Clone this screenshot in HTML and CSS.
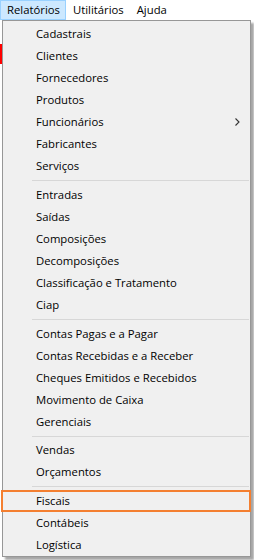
FILE: index.html
```html
<!DOCTYPE html>
<html lang="pt">
<head>
<meta charset="utf-8">
<link rel="stylesheet" href="styles.css">
</head>
<body>
<div class="menubar">
  <div class="top-item active">Relatórios</div>
  <div class="top-item">Utilitários</div>
  <div class="top-item">Ajuda</div>
</div>
<div class="marker"></div>
<div class="dropdown">
  <div class="item">Cadastrais</div>
  <div class="item">Clientes</div>
  <div class="item">Fornecedores</div>
  <div class="item">Produtos</div>
  <div class="item sub">Funcionários<svg class="arrow" width="5" height="8" viewBox="0 0 5 8"><path d="M0.5 0.5 L4 4 L0.5 7.5" fill="none" stroke="#333" stroke-width="1.1"/></svg></div>
  <div class="item">Fabricantes</div>
  <div class="item">Serviços</div>
  <div class="sep"></div>
  <div class="item">Entradas</div>
  <div class="item">Saídas</div>
  <div class="item">Composições</div>
  <div class="item">Decomposições</div>
  <div class="item">Classificação e Tratamento</div>
  <div class="item">Ciap</div>
  <div class="sep"></div>
  <div class="item">Contas Pagas e a Pagar</div>
  <div class="item">Contas Recebidas e a Receber</div>
  <div class="item">Cheques Emitidos e Recebidos</div>
  <div class="item">Movimento de Caixa</div>
  <div class="item">Gerenciais</div>
  <div class="sep"></div>
  <div class="item">Vendas</div>
  <div class="item">Orçamentos</div>
  <div class="sep"></div>
  <div class="item">Fiscais</div>
  <div class="item">Contábeis</div>
  <div class="item">Logística</div>
</div>
<div class="highlight"></div>
</body>
</html>
```
FILE: styles.css
```css
html, body {
  margin: 0;
  padding: 0;
  background: #ffffff;
  width: 254px;
  height: 560px;
  overflow: hidden;
  font-family: "Open Sans", "Noto Sans", sans-serif;
  font-size: 11.3px;
  color: #000;
  position: relative;
}
.menubar {
  display: flex;
  height: 20px;
  align-items: stretch;
}
.top-item {
  padding: 0 5px 0 6px;
  line-height: 18px;
  height: 18px;
  border: 1px solid transparent;
}
.top-item.active {
  background: #cce8ff;
  border-color: #99d1ff;
}
.dropdown {
  margin-left: 2px;
  width: 247px;
  height: 533px;
  border: 1px solid #979797;
  background: #f0f0f0;
  padding-top: 2px;
  box-sizing: content-box;
  box-shadow: 3px 3px 2px rgba(0, 0, 0, 0.35);
  display: flex;
  flex-direction: column;
}
.item {
  height: 22px;
  line-height: 22px;
  padding-left: 33px;
  display: flex;
  align-items: center;
  white-space: nowrap;
}
.item.sub {
  justify-content: space-between;
  padding-right: 10px;
}
.arrow {
  display: block;
}
.sep {
  height: 1px;
  background: #d7d7d7;
  margin: 3px 1px 3px 29px;
}
.marker {
  position: absolute;
  left: 0;
  top: 44px;
  width: 2px;
  height: 20px;
  background: #ff0000;
}
.highlight {
  position: absolute;
  left: 1px;
  top: 490px;
  width: 250px;
  height: 22px;
  border: 2px solid #f47f30;
  box-sizing: border-box;
}
```
